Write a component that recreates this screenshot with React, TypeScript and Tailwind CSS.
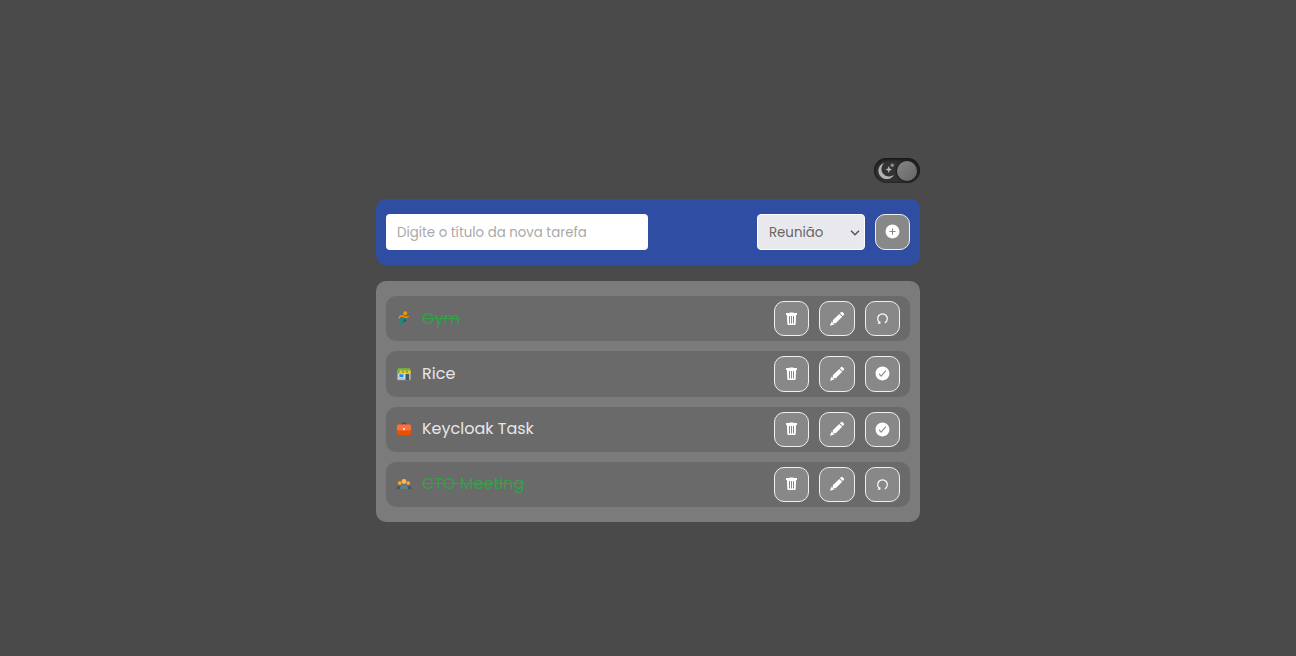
import { useState } from "react";
import { IoAddCircle, IoCheckmarkCircle } from "react-icons/io5";

type Kind = "gym" | "shop" | "work" | "meeting";
type Task = { id: number; title: string; kind: Kind; done: boolean };

const initialTasks: Task[] = [
  { id: 1, title: "Gym", kind: "gym", done: true },
  { id: 2, title: "Rice", kind: "shop", done: false },
  { id: 3, title: "Keycloak Task", kind: "work", done: false },
  { id: 4, title: "CTO Meeting", kind: "meeting", done: true },
];

function KindIcon({ kind }: { kind: Kind }) {
  return (
    <svg viewBox="-2 -2 52 52" className="size-4 shrink-0" aria-hidden="true">
      {kind === "gym" && (
        <g fill="none" strokeLinecap="round" strokeLinejoin="round">
          <path d="M26 25l3 3-5 4" stroke="#00695c" strokeWidth="5" />
          <path d="M25 18l-7 11-7 10" stroke="#009688" strokeWidth="7" />
          <path d="M8 20l4-5 10-1 8 5 8-3" stroke="#ff9800" strokeWidth="4" />
          <circle cx="28" cy="5" r="6" fill="#ff9800" />
        </g>
      )}
      {kind === "shop" && (
        <g>
          <path fill="#cfd8dc" d="M3 19h42v23H3z" />
          <path fill="#b0bec5" d="M3 38h42v6H3z" />
          <path fill="#455a64" d="M29 24h12v20H29z" />
          <path fill="#bbdefb" d="M7 23h17v13H7z" />
          <path fill="#1e88e5" d="M9 25h13v9H9z" />
          <path fill="#7cb342" d="M4 5h40v9H4zM1 12h9v7a4.500 4.500 0 0 1-9 0zM18 12h6v7a3 3 0 0 1-6 0zM31 12h6v7a3 3 0 0 1-6 0z" />
          <path fill="#ffc107" d="M10 13h8v7a4 4 0 0 1-8 0zM24 13h7v7a3 3 0 0 1-7 0zM37 13h9v7a4 4 0 0 1-9 0z" />
        </g>
      )}
      {kind === "work" && (
        <g>
          <path fill="#424242" d="M27 3h-6a4 4 0 0 0-4 4v3h3V7c0-.6.4-1 1-1h6c.6 0 1 .4 1 1v3h3V7a4 4 0 0 0-4-4z" />
          <path fill="#e65100" d="M42 44H6a5 5 0 0 1-5-5V15a5 5 0 0 1 5-5h36a5 5 0 0 1 5 5v24a5 5 0 0 1-5 5z" />
          <path fill="#ff6e40" d="M43 29H5a4 4 0 0 1-4-4V14a5 5 0 0 1 5-5h36a5 5 0 0 1 5 5v11a4 4 0 0 1-4 4z" />
          <rect x="21" y="21" width="6" height="6" rx="1" fill="#fff3e0" />
        </g>
      )}
      {kind === "meeting" && (
        <g>
          <circle cx="10" cy="21" r="6" fill="#ffa726" />
          <circle cx="38" cy="21" r="6" fill="#ffa726" />
          <circle cx="24" cy="16" r="8" fill="#ffb74d" />
          <path fill="#455a64" d="M0 41v-2c0-6 4-9 10-9s10 3 10 9v2zM28 41v-2c0-6 4-9 10-9s10 3 10 9v2z" />
          <path fill="#607d8b" d="M11 41v-3c0-8 5-12 13-12s13 4 13 12v3z" />
        </g>
      )}
    </svg>
  );
}

function TrashIcon() {
  return (
    <svg viewBox="0 0 13 14" className="h-[14px] w-[13px]" fill="currentColor" aria-hidden="true">
      <path
        fillRule="evenodd"
        d="M4.500.5h4V1H12v2h-.900l-.4 8.700c0 .7-.6 1.300-1.300 1.300H3.600c-.7 0-1.300-.6-1.300-1.300L1.900 3H1V1h3.500zM4 4v7.500h1V4zm2 0v7.500h1V4zm2 0v7.500h1V4z"
      />
    </svg>
  );
}

function PencilIcon() {
  return (
    <svg viewBox="0 0 16 16" className="size-4" fill="currentColor" aria-hidden="true">
      <path d="M10.900 2.300l1.300-1.200a.9.9 0 0 1 1.200 0l1.500 1.500a.9.9 0 0 1 0 1.200l-1.200 1.300z" />
      <path d="M10.300 2.900l2.900 2.900L7 12a1 1 0 0 1-1.500 0 1 1 0 0 1-1.500-1.500 1 1 0 0 1 0-1.400z" />
      <path d="M3 9.900a1.900 1.900 0 0 0 1.200 2 1.900 1.900 0 0 0 1.900 1.200L2.100 14.600a.7.7 0 0 1-.9-.9z" />
    </svg>
  );
}

function RedoIcon() {
  return (
    <svg viewBox="0 0 13 13" className="size-[13px]" fill="none" stroke="currentColor" strokeLinecap="round" strokeWidth="1.200" aria-hidden="true">
      <path d="M3.200 10.100A4.800 4.800 0 1 1 9.800 10.100" />
      <path d="M2.300 11.100h1.500V9.700" />
      <path d="M9.200 10.600l.6-.5" />
    </svg>
  );
}

const buttonClass =
  "flex w-full items-center justify-center rounded-[10px] border border-[#f0f0f0] bg-[#888888] text-white";

export default function App() {
  const [tasks, setTasks] = useState(initialTasks);
  const [title, setTitle] = useState("");
  const [dark, setDark] = useState(true);
  const toggle = (id: number) =>
    setTasks(tasks.map((t) => (t.id === id ? { ...t, done: !t.done } : t)));

  return (
    <main className="flex min-h-screen items-center justify-center bg-[#4a4a4a] px-4 pt-6 font-['Poppins','Inter',sans-serif]">
      <div className="flex w-full max-w-[544px] flex-col gap-4">
        <button
          type="button"
          role="switch"
          aria-checked={dark}
          aria-label="Modo escuro"
          onClick={() => setDark(!dark)}
          className="flex h-[25px] w-[46px] items-center justify-between self-end rounded-full bg-[#333333] px-[3px] pt-px shadow-[inset_0_1px_3px_1px_#161616]"
        >
          <svg viewBox="0 0 18 18" className="size-[18px] text-[#b4b4b4]" fill="currentColor" aria-hidden="true">
            <path d="M7.200.9A8.300 8.300 0 1 0 17 12.800 6.800 6.800 0 0 1 7.200.9z" />
            <path d="M11.800 4.100l1 2.400 2.400 1-2.400 1-1 2.400-1-2.400-2.400-1 2.400-1z" />
            <circle cx="15.300" cy="3.300" r="1.700" opacity=".7" />
          </svg>
          <span className="size-5 rounded-full bg-linear-to-br from-[#858585] to-[#666666] shadow-[0_0_2px_1px_#1c1c1c]" />
        </button>

        <form
          onSubmit={(e) => e.preventDefault()}
          className="flex items-center rounded-[10px] bg-[#2f4da3] px-[10px] py-[15px]"
        >
          <input
            type="text"
            aria-label="Título da nova tarefa"
            placeholder="Digite o título da nova tarefa"
            value={title}
            onChange={(e) => setTitle(e.target.value)}
            className="h-9 w-[262px] min-w-0 rounded-[4px] bg-white px-[11px] pt-[2px] text-[length:smaller] text-[#555555] outline-none placeholder:text-[#a9a9a9]"
          />
          <div className="relative ml-auto shrink-0">
            <select
              aria-label="Categoria"
              defaultValue="Reunião"
              className="block h-9 w-[108px] appearance-none rounded-[4px] border border-white bg-[#e9e9ed] px-[11px] pt-[2px] text-[length:smaller] text-[#666666]"
            >
              <option>Reunião</option>
              <option>Trabalho</option>
              <option>Compras</option>
              <option>Academia</option>
            </select>
            <svg viewBox="0 0 10 6" className="pointer-events-none absolute top-4 right-[5px] h-[6px] w-[10px] text-[#555555]" fill="none" stroke="currentColor" strokeWidth="1.5" aria-hidden="true">
              <path d="M1 .8l4 4 4-4" />
            </svg>
          </div>
          <div className="ml-[10px] w-[35px] shrink-0">
            <button type="submit" aria-label="Adicionar" className={`${buttonClass} h-9`}>
              <IoAddCircle className="size-[17px]" />
            </button>
          </div>
        </form>

        <ul className="flex flex-col gap-[10px] rounded-[10px] bg-[#7b7b7b] px-[10px] py-[15px]">
          {tasks.map((task) => (
            <li key={task.id} className="flex items-center rounded-[10px] bg-[#6a6a6a] px-[10px] py-[5px]">
              <KindIcon kind={task.kind} />
              <span
                className={
                  task.done
                    ? "ml-[10px] min-w-0 flex-1 text-base text-[#34a048] line-through"
                    : "ml-[10px] min-w-0 flex-1 text-base text-[#e6e6e6]"
                }
              >
                {task.title}
              </span>
              <div className="grid w-[126px] shrink-0 grid-cols-3 gap-[10px]">
                <button type="button" aria-label="Excluir" className={`${buttonClass} aspect-square`} onClick={() => setTasks(tasks.filter((t) => t.id !== task.id))}>
                  <TrashIcon />
                </button>
                <button type="button" aria-label="Editar" className={`${buttonClass} aspect-square`}>
                  <PencilIcon />
                </button>
                <button type="button" aria-label={task.done ? "Reabrir" : "Concluir"} className={`${buttonClass} aspect-square`} onClick={() => toggle(task.id)}>
                  {task.done ? <RedoIcon /> : <IoCheckmarkCircle className="size-[17px]" />}
                </button>
              </div>
            </li>
          ))}
        </ul>
      </div>
    </main>
  );
}
